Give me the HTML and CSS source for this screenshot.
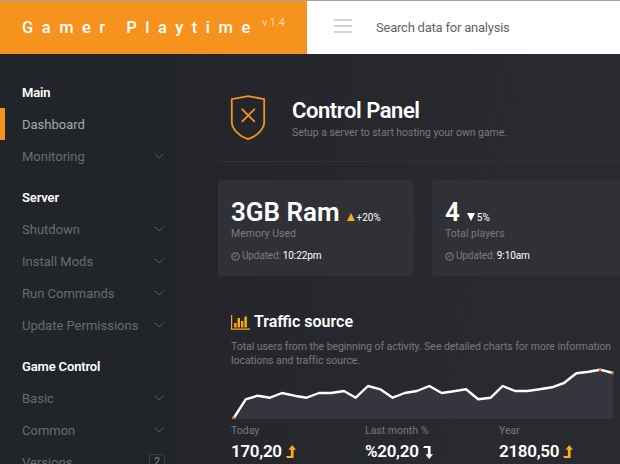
FILE: index.html
```html
<!DOCTYPE html>
<html lang="en">
<head>
<meta charset="utf-8">
<title>Gamer Playtime</title>
<link rel="stylesheet" href="styles.css">
</head>
<body>
<svg class="defs" width="0" height="0">
  <symbol id="chevron" viewBox="0 0 10 6"><path d="M.7.7 5 5 9.3.7" fill="none" stroke="currentColor"/></symbol>
  <symbol id="clock" viewBox="0 0 10 10"><circle cx="5" cy="5" r="4.1" fill="none" stroke="currentColor" stroke-width="1.3"/><path d="M5.4 2.6v2.7H3" fill="none" stroke="currentColor" stroke-width="1.1"/></symbol>
  <symbol id="level" viewBox="0 0 10 14"><path d="M6.2 0 10 4.7H7.6V13H1.2L0 11H4.9V4.7H2.5z" fill="currentColor"/></symbol>
</svg>
<header class="topbar">
  <div class="brand"><span class="brand-name">Gamer Playtime</span><span class="version">v.1.4</span></div>
  <svg class="burger" viewBox="0 0 18 14"><path d="M.5 1h17M.5 7h17M.5 13h17" stroke="#a4abb3" stroke-width="1.2" stroke-linecap="round"/></svg>
  <span class="search">Search data for analysis</span>
</header>
<div class="body">
  <nav class="sidebar">
    <div class="row category">Main</div>
    <div class="row active">Dashboard</div>
    <div class="row">Monitoring<svg class="chev"><use href="#chevron"/></svg></div>
    <div class="row category">Server</div>
    <div class="row">Shutdown<svg class="chev"><use href="#chevron"/></svg></div>
    <div class="row">Install Mods<svg class="chev"><use href="#chevron"/></svg></div>
    <div class="row">Run Commands<svg class="chev"><use href="#chevron"/></svg></div>
    <div class="row">Update Permissions<svg class="chev"><use href="#chevron"/></svg></div>
    <div class="row category">Game Control</div>
    <div class="row">Basic<svg class="chev"><use href="#chevron"/></svg></div>
    <div class="row">Common<svg class="chev"><use href="#chevron"/></svg></div>
    <div class="row">Versions<span class="badge">2</span></div>
  </nav>
  <main class="content">
    <section class="heading">
      <svg class="shield" viewBox="0 0 36 46" fill="none" stroke="#f6931d" stroke-width="1.8"><path d="M18 1.1 34.2 4.2V27C34.2 34 27 41 18 44.2 9 41 1.8 34 1.8 27V4.2z"/><path d="m12.3 14.3 12 12m0-12-12 12" stroke-linecap="round"/></svg>
      <div>
        <h1>Control Panel</h1>
        <p class="note">Setup a server to start hosting your own game.</p>
      </div>
    </section>
    <section class="cards">
      <article class="card">
        <h2><span class="figure">3GB Ram</span><svg class="tri up" viewBox="0 0 8 8"><path d="M4 0 8 8H0z"/></svg><small>+20%</small></h2>
        <p class="label">Memory Used</p>
        <p class="updated"><svg class="clock"><use href="#clock"/></svg>Updated: <b>10:22pm</b></p>
      </article>
      <article class="card">
        <h2><span class="figure">4</span><svg class="tri" viewBox="0 0 8 8"><path d="M0 0h8L4 8z"/></svg><small>5%</small></h2>
        <p class="label">Total players</p>
        <p class="updated"><svg class="clock"><use href="#clock"/></svg>Updated: <b>9:10am</b></p>
      </article>
    </section>
    <section class="traffic">
      <h3><svg class="bars" viewBox="0 0 19 15"><path d="M.6 0v14.1H19" fill="none" stroke="#fbab18" stroke-width="1.2"/><path d="M3.2 8h2.4v4.5H3.2zM6.6 3H9v9.5H6.6zM10 6h2.4v6.5H10zM13.4 1.5h2.5v11h-2.5z" fill="#fbab18"/></svg>Traffic source</h3>
      <p class="note description">Total users from the beginning of activity. See detailed charts for more information<br>locations and traffic source.</p>
      <svg class="spark" viewBox="0 0 384 54">
        <path fill="#35353d" d="M2.5 53.5 14.7 34.3 26.7 30.7 39 32.7 51 28 63.3 30.7 75.7 32.7 88 28H100.3L113 26 124.7 32.7 137 21 149.3 24.3 161.7 32.7 173.7 28 186 26 198.3 21 210.7 28 222.7 26.3 235 24.3 247.3 34.3 259.7 32.7 271.7 21 284 26H296.3L308.7 24.3 321 22.3 333 18 345.3 8.3 357.7 6.7 369 4.7 382 8V54H2.5z"/>
        <path fill="none" stroke="#fff" stroke-width="2.4" stroke-linejoin="round" d="M2.5 53.5 14.7 34.3 26.7 30.7 39 32.7 51 28 63.3 30.7 75.7 32.7 88 28H100.3L113 26 124.7 32.7 137 21 149.3 24.3 161.7 32.7 173.7 28 186 26 198.3 21 210.7 28 222.7 26.3 235 24.3 247.3 34.3 259.7 32.7 271.7 21 284 26H296.3L308.7 24.3 321 22.3 333 18 345.3 8.3 357.7 6.7 369 4.7 382 8"/>
        <g fill="#f4701c"><circle cx="2.4" cy="52.6" r="1.5"/><circle cx="369" cy="4.7" r="1.4"/><circle cx="381.5" cy="8" r="1.5"/></g>
      </svg>
      <div class="stats">
        <div><p class="label">Today</p><strong>170,20<svg class="level gold"><use href="#level"/></svg></strong></div>
        <div><p class="label">Last month %</p><strong>%20,20<svg class="level down"><use href="#level"/></svg></strong></div>
        <div><p class="label">Year</p><strong>2180,50<svg class="level gold"><use href="#level"/></svg></strong></div>
      </div>
    </section>
  </main>
</div>
</body>
</html>
```
FILE: styles.css
```css
* { box-sizing: border-box; }
html, body { height: 464px; overflow: hidden; }
body {
  margin: 0;
  display: flex;
  flex-direction: column;
  font-family: Roboto, "Liberation Sans", sans-serif;
  background: #24262b;
  color: #fff;
}
.defs { position: absolute; }
svg { flex: none; }
h1, h2, h3, p { margin: 0; }

.topbar {
  flex: none;
  display: flex;
  align-items: center;
  height: 54px;
  border-top: 1px solid #a3a1a2;
  background: #fff;
}
.brand {
  display: flex;
  width: 307px;
  height: 53px;
  padding-left: 22px;
  background: #f6931d;
  line-height: 53px;
  white-space: nowrap;
}
.brand-name { width: 240px; font-size: 16.5px; font-weight: 500; letter-spacing: 8.5px; }
.version { font-size: 11px; line-height: 44px; color: #fbd9ae; }
.burger { width: 18px; height: 14px; margin: 0 24px 4px 27px; }
.search { font-size: 13px; letter-spacing: -.22px; color: #5e646e; }

.body { flex: 1; display: flex; min-height: 0; }
.sidebar { flex: none; width: 177px; padding-top: 22px; background: #212429; overflow: hidden; }
.row {
  display: flex;
  align-items: center;
  justify-content: space-between;
  height: 32px;
  padding: 0 13px 0 22px;
  font-size: 13px;
  color: #686c73;
}
.category { font-weight: 600; letter-spacing: -.15px; color: #fff; }
.row + .category { margin-top: 9px; }
.active { border-left: 5px solid #f6931d; padding-left: 17px; color: #a7a9ad; }
.chev { width: 10px; height: 6px; color: #565a61; }
.badge {
  width: 16px;
  height: 16px;
  margin-right: -1px;
  border: 1px solid #3b3e44;
  border-radius: 3px;
  font-size: 10px;
  line-height: 14px;
  text-align: center;
  color: #898c92;
}

.content { flex: none; width: 443px; padding-left: 41px; background: linear-gradient(100deg, #24252a, #292a2f 70%); overflow: hidden; }
.heading { display: flex; gap: 26px; height: 108px; padding: 41px 0 0 12px; border-bottom: 1px solid #313238; }
.shield { width: 36px; height: 46px; }
h1 { margin-top: 2px; font-size: 22px; line-height: 28px; font-weight: 600; letter-spacing: -.45px; }
.note, .label { font-size: 10.5px; color: #777b83; }
.note { letter-spacing: -.05px; }
.heading .note { line-height: 15px; }

.cards { display: grid; grid-template-columns: 196px 205px; gap: 18px; margin-top: 18px; }
.card { height: 96px; padding: 17px 13px 0; border-radius: 3px 0 0 3px; background: #303137; }
.card:first-child { border-radius: 3px; }
.card h2 { display: flex; align-items: baseline; height: 29px; font-size: 26px; line-height: 30px; font-weight: 600; }
.tri { width: 8px; height: 8px; margin: 0 2px 0 7px; fill: #fff; }
.up { fill: #fbab18; }
.card small { font-size: 10px; font-weight: 400; letter-spacing: -.1px; }
.card .label { line-height: 15px; }
.updated { display: flex; align-items: center; margin-top: 8px; font-size: 10px; line-height: 14px; letter-spacing: -.12px; color: #777b83; }
.updated b { margin-left: 2px; font-weight: 400; color: #fff; }
.clock { width: 9px; height: 9px; margin-right: 2px; }

.traffic { padding: 36px 0 0 13px; }
h3 { display: flex; align-items: center; gap: 4px; font-size: 16px; line-height: 20px; font-weight: 600; }
.bars { width: 19px; height: 15px; }
.description { margin-top: 8px; line-height: 14px; white-space: nowrap; }
.spark { display: block; width: 384px; height: 54px; margin-top: -3px; }
.stats { display: grid; grid-template-columns: 134px 134px 120px; margin-top: 5px; }
.stats .label { line-height: 14px; }
.stats strong { display: flex; align-items: center; font-size: 17px; line-height: 27px; font-weight: 600; letter-spacing: -.3px; }
.level { width: 10px; height: 14px; margin-left: 4px; }
.gold { color: #fbab18; }
.down { transform: scaleY(-1); }
```
